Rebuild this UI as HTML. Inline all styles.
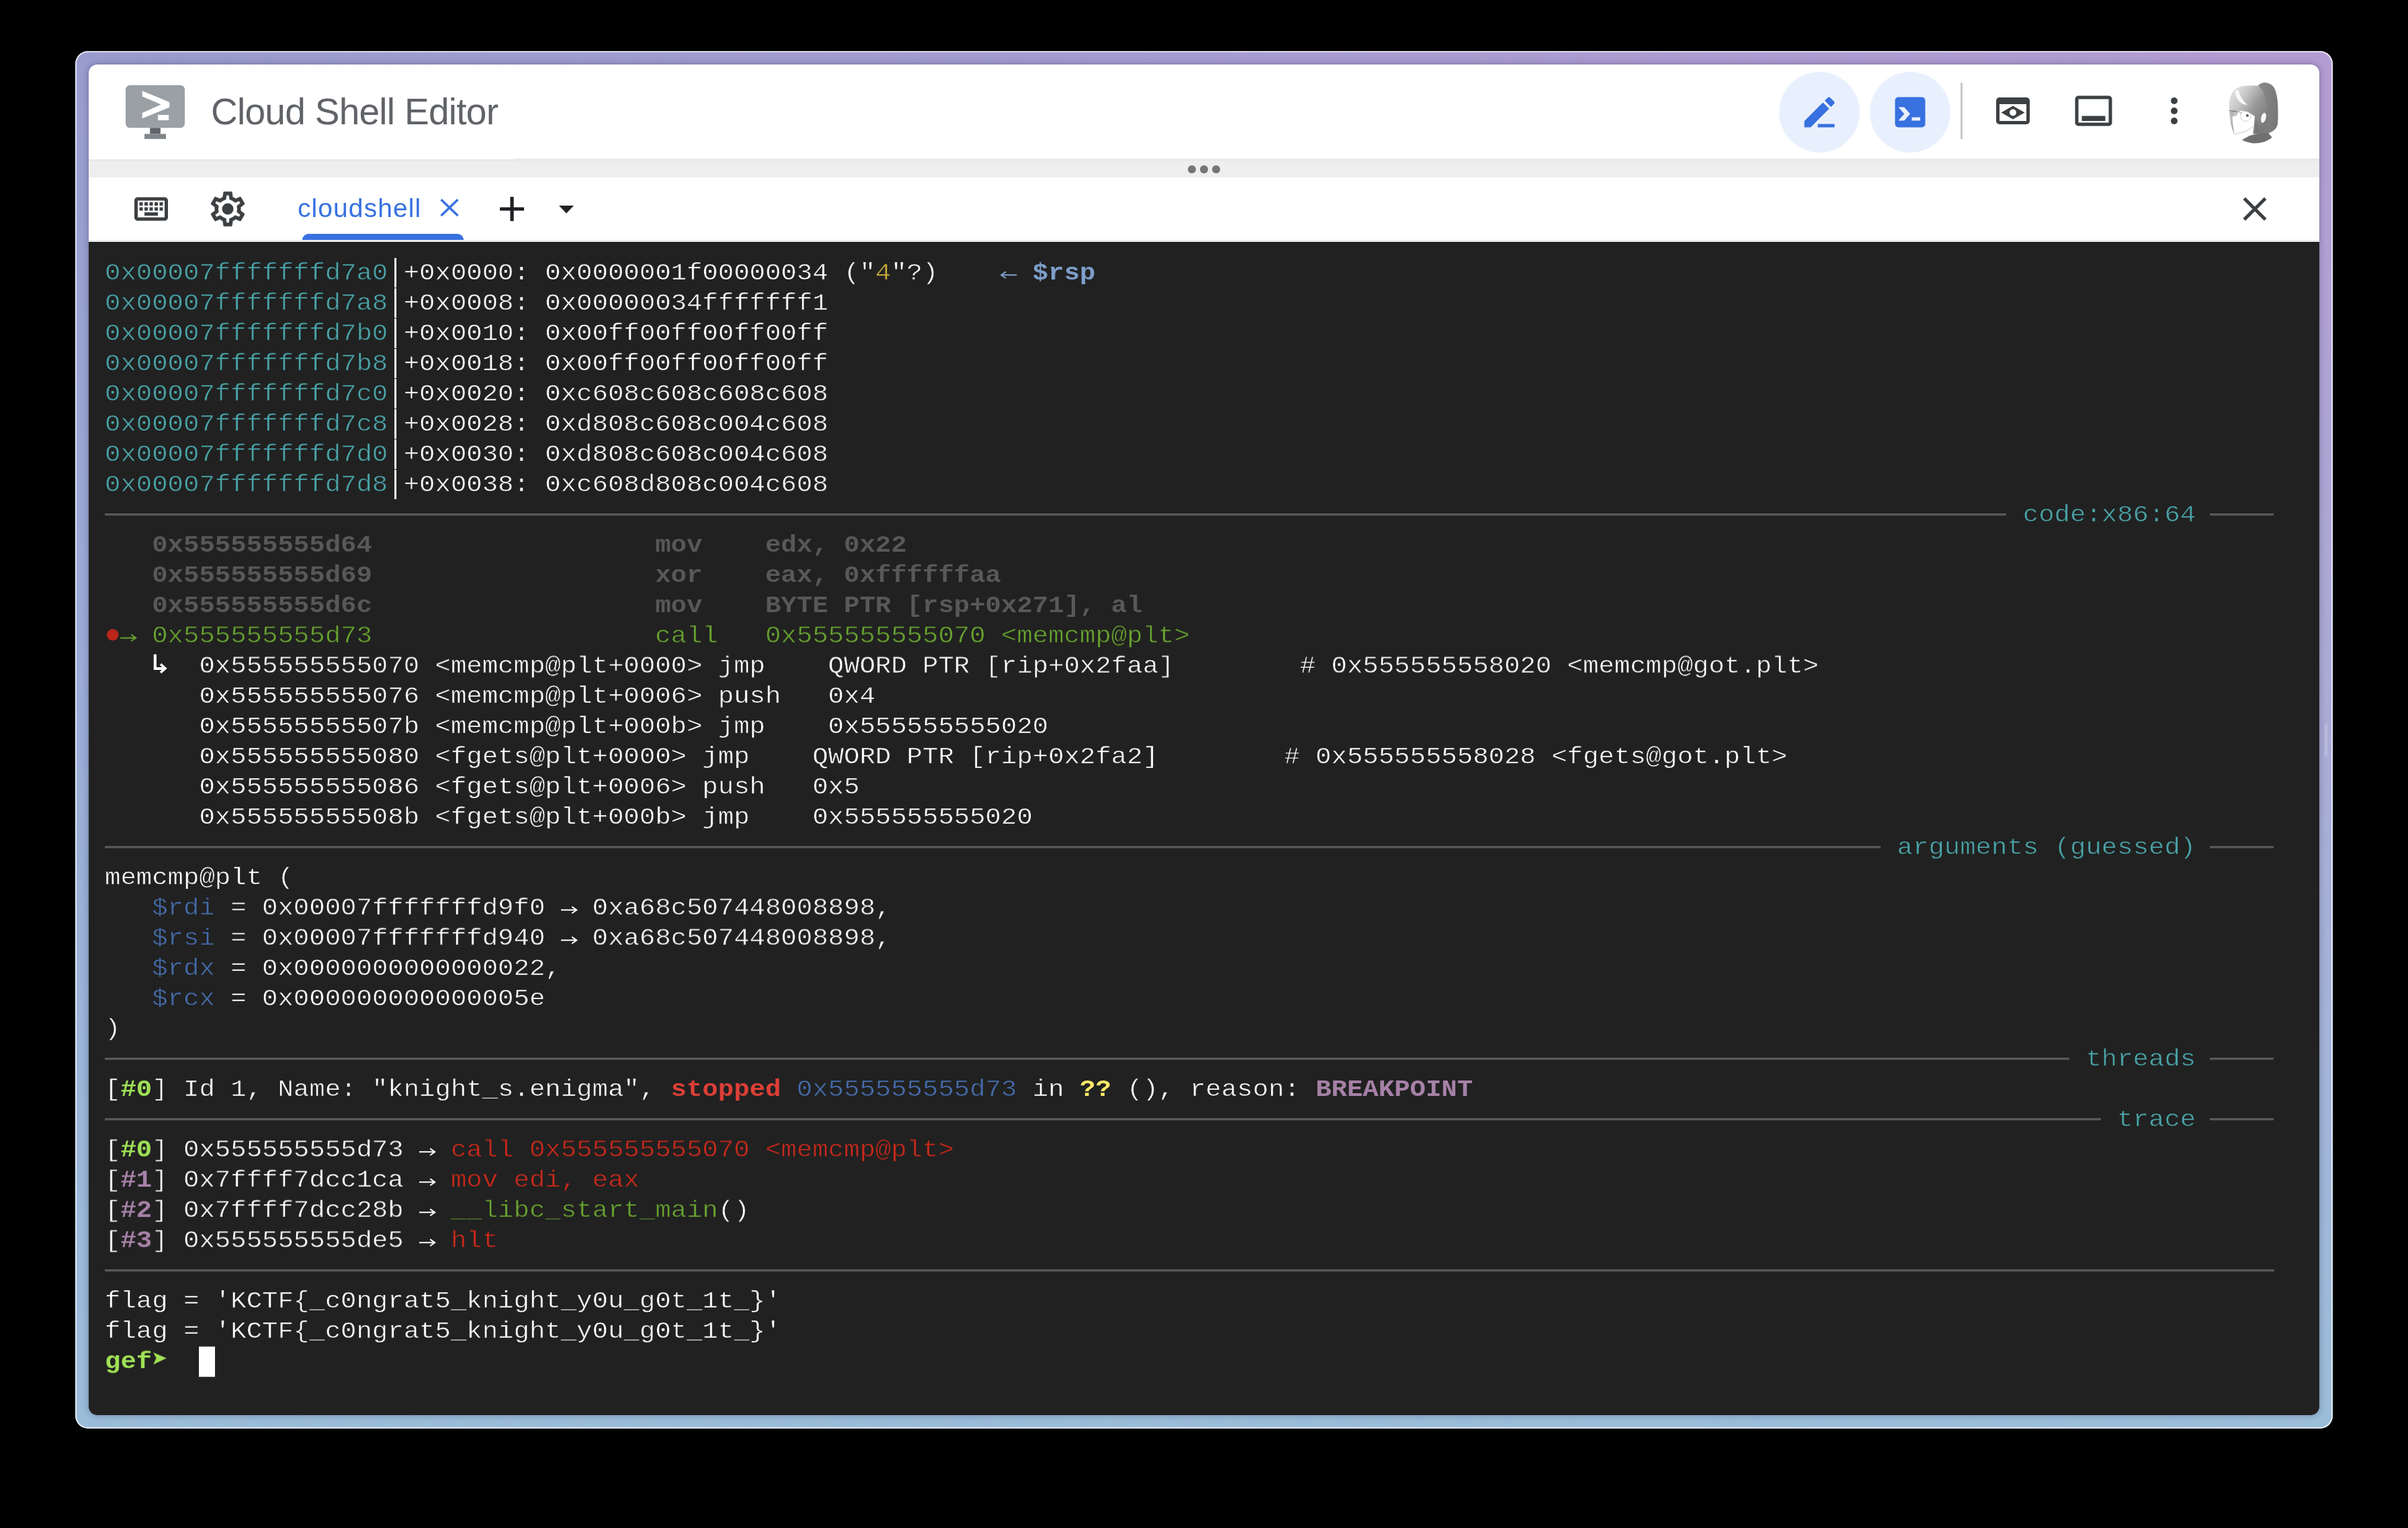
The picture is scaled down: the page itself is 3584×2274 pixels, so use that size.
<!DOCTYPE html>
<html><head><meta charset="utf-8"><title>Cloud Shell Editor</title>
<style>
html,body{margin:0;padding:0}
body{width:3584px;height:2274px;background:#000;position:relative;overflow:hidden;font-family:"Liberation Sans",sans-serif}
.frame{position:absolute;left:112px;top:76px;width:3360px;height:2050px;border-radius:19px;overflow:hidden;
 background:linear-gradient(to bottom,#999CCD 0%,#9AABD5 46%,#9BBDD9 100%)}
.frame:before{content:"";position:absolute;inset:0;background:linear-gradient(to bottom,#B39BD1 0%,#ABABD5 46%,#9BBDD9 100%);
 -webkit-mask-image:linear-gradient(to right,transparent 0%,#000 100%);mask-image:linear-gradient(to right,transparent 0%,#000 100%)}
.frame:after{content:"";position:absolute;inset:0;border-radius:19px;box-shadow:inset 0 0 0 1.6px rgba(245,247,255,.95), inset 0 0 2px 1.5px rgba(255,255,255,.3)}
.win{position:absolute;left:132px;top:96px;width:3320px;height:2010px;border-radius:13px;overflow:hidden}
.winsh{position:absolute;left:132px;top:96px;width:3320px;height:2010px;border-radius:13px;box-shadow:0 0 9px 1px rgba(40,40,80,.32)}
.hdr{position:absolute;left:0;top:0;width:3320px;height:141px;background:#fff}
.hb1{position:absolute;left:0;top:141px;width:633px;height:3px;background:#E8EAED}
.hb2{position:absolute;left:633px;top:140px;width:2687px;height:4px;background:#E8EAED}
.rsz{position:absolute;left:0;top:144px;width:3320px;height:24px;background:#EEEEEE}
.tabs{position:absolute;left:0;top:168px;width:3320px;height:93px;background:#fff;border-bottom:2px solid #E8EAED;box-shadow:0 1px 0 #F4F5FA}
.termbg{position:absolute;left:0;top:264px;width:3320px;height:1746px;background:#212121;border-top:1px solid #161616;box-sizing:border-box}
.term{position:absolute;left:0;top:264px;width:3320px;height:1746px;will-change:transform}
.abs{position:absolute}
.title{position:absolute;left:182px;top:35px;font-size:55px;line-height:70px;letter-spacing:-0.72px;color:#606367;white-space:pre}
.tabtxt{will-change:transform;position:absolute;left:310.9px;top:188.7px;font-size:39px;line-height:50px;letter-spacing:1.08px;color:#3871E0;white-space:pre}
.circ{position:absolute;width:120px;height:120px;border-radius:60px;background:#E9F0FD;top:11px}
.rows{position:absolute;left:24px;top:24px;font-family:"Liberation Mono",monospace;font-size:39px;line-height:45px;color:#fff;-webkit-text-stroke:0.6px #212121;paint-order:fill stroke}
.row{position:relative;height:45px;width:3230px;white-space:pre;transform:scaleY(.91);transform-origin:0 32.9px}
.vb,.cur,.gl,.hl,.st{transform:scaleY(1.0989);transform-origin:0 32.9px}
.bd{font-weight:bold;-webkit-text-stroke:0 transparent}
.vb{display:inline-block;width:23.4px;height:44px;vertical-align:top;background:linear-gradient(#fff,#fff) 10px 0/3.4px 44px no-repeat}
.hl{position:absolute;top:0;height:45px;background:linear-gradient(#585858,#585858) 0 20px/100% 3px no-repeat,linear-gradient(rgba(88,88,88,.32),rgba(88,88,88,.32)) 0 23px/100% 1px no-repeat}
.gl{display:inline-block;vertical-align:top;overflow:visible}
.cur{display:inline-block;width:23.4px;height:45px;background:#fff;vertical-align:top}
.k{color:#2F3436}
.r{color:#C82A1C}
.g{color:#68A430}
.y{color:#CCAD38}
.b{color:#456CAB}
.m{color:#705278}
.c{color:#4AA3A7}
.w{color:#FFFFFF}
.K{color:#585858}
.R{color:#DC3F36}
.G{color:#9EE055}
.Y{color:#F9EA6B}
.B{color:#7C9ECB}
.M{color:#A681A6}
</style></head>
<body>
<div class="frame"></div>
<div class="abs" style="left:3460px;top:1077px;width:4px;height:48px;border-radius:2px;background:rgba(255,255,255,.2)"></div>
<div class="winsh"></div>
<div class="win">
 <div class="hdr"></div><div class="hb1"></div><div class="hb2"></div>
 <!-- logo -->
 <svg class="abs" style="left:55px;top:30px" width="88" height="82" viewBox="0 0 88 82">
  <rect x="0" y="0.8" width="88" height="63.5" rx="6.5" fill="#9BA0A5"/>
  <rect x="36.3" y="64.3" width="15.5" height="9" fill="#606367"/>
  <rect x="28" y="73.3" width="32" height="7.5" fill="#81868A"/>
  <path d="M24.7 9.3L65.2 26.1V33.8L24.7 50.2V41.9L52.7 29.4L24.7 17.6Z" fill="#fff"/>
  <rect x="48" y="45" width="16.2" height="8" fill="#fff"/>
 </svg>
 <div class="title">Cloud Shell Editor</div>
 <!-- right header icons -->
 <div class="circ" style="left:2516px"></div>
 <div class="circ" style="left:2651px"></div>
 <svg class="abs" style="left:2546px;top:41px" width="60" height="60" viewBox="0 0 24 24"><path fill="#3871E0" d="M3 17.25V21h3.75L17.81 9.94l-3.75-3.75L3 17.25zM20.71 7.04c.39-.39.39-1.02 0-1.41l-2.34-2.34c-.39-.39-1.02-.39-1.41 0l-1.83 1.83 3.75 3.75 1.83-1.83zM11 19h10v2H11z"/></svg>
 <svg class="abs" style="left:2681px;top:41px" width="60" height="60" viewBox="0 0 24 24"><path fill="#3871E0" fill-rule="evenodd" d="M5 3h14a2 2 0 0 1 2 2v14a2 2 0 0 1-2 2H5a2 2 0 0 1-2-2V5a2 2 0 0 1 2-2zM5 9h3.5L12 13l-3.5 4H5l3.5-4zM13 15h5v2h-5z"/></svg>
 <div class="abs" style="left:2786px;top:27px;width:3px;height:84px;background:#C8C8C8"></div>
 <svg class="abs" style="left:2834px;top:39px" width="60" height="60" viewBox="0 0 24 24"><path fill="#3D4043" fill-rule="evenodd" d="M4 4h16a2 2 0 0 1 2 2v12a2 2 0 0 1-2 2H4a2 2 0 0 1-2-2V6a2 2 0 0 1 2-2zM4 8v10h16V8zM5 13l7-4 7 4-7 4zM12 11a2 2 0 1 0 0 4 2 2 0 0 0 0-4z"/></svg>
 <svg class="abs" style="left:2954px;top:39px" width="60" height="60" viewBox="0 0 24 24"><path fill="#3D4043" fill-rule="evenodd" d="M3 3h18a2 2 0 0 1 2 2v14a2 2 0 0 1-2 2H3a2 2 0 0 1-2-2V5a2 2 0 0 1 2-2zM3 5v14h18V5zM5 15h14v3H5z"/></svg>
 <svg class="abs" style="left:3074px;top:39px" width="60" height="60" viewBox="0 0 24 24"><g fill="#3D4043"><circle cx="12" cy="6" r="2"/><circle cx="12" cy="12" r="2"/><circle cx="12" cy="18" r="2"/></g></svg>
 <!-- avatar -->
 <svg class="abs" style="left:3176px;top:23px" width="96" height="96" viewBox="0 0 96 96">
  <defs><clipPath id="avc"><circle cx="48" cy="48" r="48"/></clipPath>
  <linearGradient id="hg" x1="0.15" y1="0.05" x2="0.95" y2="0.75"><stop offset="0" stop-color="#E2E2E2"/><stop offset="0.3" stop-color="#C4C4C4"/><stop offset="0.6" stop-color="#989898"/><stop offset="1" stop-color="#7A7A7A"/></linearGradient>
  <linearGradient id="pg" x1="0" y1="0" x2="1" y2="0.3"><stop offset="0" stop-color="#8C8C8C"/><stop offset="1" stop-color="#787878"/></linearGradient>
  <filter id="avb"><feGaussianBlur stdDeviation="0.5"/></filter></defs>
  <g clip-path="url(#avc)" filter="url(#avb)">
   <rect width="96" height="96" fill="#fff"/>
   <path d="M52.6 8.5Q58 3.5 64.5 3.9Q72 4.5 76.5 11Q81.5 20 82.3 38Q83 55 82 66Q80.5 72 75 76L68 79.5L62 78L66 50L60 18Z" fill="url(#pg)"/>
   <path d="M10 45.1Q9.5 35 10.8 28Q12.5 20.5 17 15.5Q22 10.8 30 9.2Q41 7.6 52.6 8.5Q57.5 12 60.5 19Q64.5 28 66 40Q67.5 56 65.5 70L63.6 78.5Q56 80.5 45.3 80.6Q46.8 68 48 54.3Q43 50 37 47.6Q29 45 22 46.3Q18 47 16 49.5Q14.5 54 15.2 63.4Q16 73 17.8 80.8Q13.5 73 11.5 62Q10.2 53 10 45.1Z" fill="url(#hg)"/>
   <path d="M18.5 17Q19.5 29 28 34.5Q32.5 37.3 37 37Q31 32 27.5 25.5Q24.8 20 23.5 14.5Z" fill="#FAFAFA" opacity=".95"/>
   <ellipse cx="61" cy="56.3" rx="3.6" ry="7.6" transform="rotate(14 61 56.3)" fill="#F7F7F7"/>
   <path d="M49.5 58L48 80L52 80L53.5 66Z" fill="#6E6E6E" opacity=".55"/>
   <path d="M28.8 89.5Q35 85.5 40.7 82.7Q54 79.3 67.3 78.1L73.7 85.4Q67 91 58 93Q50 94.8 43.4 93.9Q35 92.5 28.8 89.5Z" fill="#6F6F6F"/>
   <ellipse cx="16.9" cy="49.4" rx="5.8" ry="4.8" fill="#A8A8A8" opacity=".7"/>
   <circle cx="34.3" cy="53.8" r="7.6" fill="none" stroke="#BDBDBD" stroke-width="0.7"/>
   <path d="M9.5 45.5L23 47.5M23 47.5Q27 46.5 27.5 50" stroke="#6a6a6a" stroke-width="0.9" fill="none"/>
   <path d="M17.8 80.8Q27 78.5 34.3 76.3Q41 73 45.3 68.9" stroke="#B8B8B8" stroke-width="0.8" fill="none"/>
   <ellipse cx="37" cy="52.9" rx="2.1" ry="1.8" fill="#4E3E36"/>
   <circle cx="37.8" cy="52.6" r="0.7" fill="#fff"/>
  </g>
 </svg>
 <!-- resize bar -->
 <div class="rsz"></div>
 <svg class="abs" style="left:1630px;top:144px" width="60" height="24" viewBox="0 0 60 24"><g fill="#757575"><circle cx="12" cy="11.9" r="6"/><circle cx="30" cy="11.9" r="6"/><circle cx="48" cy="11.9" r="6"/></g></svg>
 <!-- tab bar -->
 <div class="tabs"></div>
 <svg class="abs" style="left:63px;top:185px" width="60" height="60" viewBox="0 0 24 24"><path fill="#3D4043" d="M20 7v10H4V7h16m0-2H4c-1.1 0-1.99.9-1.99 2L2 17c0 1.1.9 2 2 2h16c1.1 0 2-.9 2-2V7c0-1.1-.9-2-2-2zm-9 3h2v2h-2zm0 3h2v2h-2zM8 8h2v2H8zm0 3h2v2H8zm-3 0h2v2H5zm0-3h2v2H5zm3 6h8v2H8zm6-3h2v2h-2zm0-3h2v2h-2zm3 3h2v2h-2zm0-3h2v2h-2z"/></svg>
 <svg class="abs" style="left:177px;top:185px" width="60" height="60" viewBox="0 0 24 24"><path fill="#3D4043" stroke="#3D4043" stroke-width="0.16" stroke-linejoin="round" transform="translate(12 12) scale(1.03) translate(-12 -12)" d="M19.43 12.98c.04-.32.07-.64.07-.98 0-.34-.03-.66-.07-.98l2.11-1.65c.19-.15.24-.42.12-.64l-2-3.46c-.09-.16-.26-.25-.44-.25-.06 0-.12.01-.17.03l-2.49 1c-.52-.4-1.08-.73-1.69-.98l-.38-2.65C14.46 2.18 14.25 2 14 2h-4c-.25 0-.46.18-.49.42l-.38 2.65c-.61.25-1.17.59-1.69.98l-2.49-1c-.06-.02-.12-.03-.18-.03-.17 0-.34.09-.43.25l-2 3.46c-.13.22-.07.49.12.64l2.11 1.65c-.04.32-.07.65-.07.98 0 .33.03.66.07.98l-2.11 1.65c-.19.15-.24.42-.12.64l2 3.46c.09.16.26.25.44.25.06 0 .12-.01.17-.03l2.49-1c.52.4 1.08.73 1.69.98l.38 2.65c.03.24.24.42.49.42h4c.25 0 .46-.18.49-.42l.38-2.65c.61-.25 1.17-.59 1.69-.98l2.49 1c.06.02.12.03.18.03.17 0 .34-.09.43-.25l2-3.46c.12-.22.07-.49-.12-.64l-2.11-1.65zm-1.98-1.71c.04.31.05.52.05.73 0 .21-.02.43-.05.73l-.14 1.13.89.7 1.08.84-.7 1.21-1.27-.51-1.04-.42-.9.68c-.43.32-.84.56-1.25.73l-1.06.43-.16 1.13-.2 1.35h-1.4l-.19-1.35-.16-1.13-1.06-.43c-.43-.18-.83-.41-1.23-.71l-.91-.7-1.06.43-1.27.51-.7-1.21 1.08-.84.89-.7-.14-1.13c-.03-.31-.05-.54-.05-.74s.02-.43.05-.73l.14-1.13-.89-.7-1.08-.84.7-1.21 1.27.51 1.04.42.9-.68c.43-.32.84-.56 1.25-.73l1.06-.43.16-1.13.2-1.35h1.39l.19 1.35.16 1.13 1.06.43c.43.18.83.41 1.23.71l.91.7 1.06-.43 1.27-.51.7 1.21-1.07.85-.89.7.14 1.13z"/><circle cx="12" cy="12" r="3.4" fill="#3D4043"/></svg>
 <div class="tabtxt">cloudshell</div>
 <svg class="abs" style="left:519px;top:195px" width="36" height="36" viewBox="0 0 36 36"><path d="M5.5 6L30.5 30M30.5 6L5.5 30" stroke="#3871E0" stroke-width="3.4" fill="none"/></svg>
 <div class="abs" style="left:318px;top:252px;width:240px;height:9px;background:#3871E0;border-radius:9px 9px 0 0"></div>
 <svg class="abs" style="left:606px;top:191px" width="48" height="48" viewBox="0 0 48 48"><path d="M24 6V42M6 24H42" stroke="#1F2023" stroke-width="5.2" fill="none"/></svg>
 <svg class="abs" style="left:696px;top:206px" width="30" height="20" viewBox="0 0 30 20"><path d="M4 4H26L15 15.4Z" fill="#202124"/></svg>
 <svg class="abs" style="left:3194px;top:185px" width="60" height="60" viewBox="0 0 24 24"><path fill="#3D4043" d="M19 6.41L17.59 5 12 10.59 6.41 5 5 6.41 10.59 12 5 17.59 6.41 19 12 13.41 17.59 19 19 17.59 13.41 12z"/></svg>
 <!-- terminal -->
 <div class="termbg"></div><div class="term"><div class="rows">
<div class="row"><span class="c">0x00007fffffffd7a0</span><i class="vb"></i>+0x0000: 0x0000001f00000034 ("<span class="y">4</span>"?)    <span class="B bd"><svg class="gl" viewBox="0 0 23.4 45" width="23.4" height="45"><path d="M23.4 25.3H0.6M7.2 20.4L0.2 25.3L7.2 30.2" fill="none" stroke="currentColor" stroke-width="2"/></svg> $rsp</span></div><div class="row"><span class="c">0x00007fffffffd7a8</span><i class="vb"></i>+0x0008: 0x00000034fffffff1</div><div class="row"><span class="c">0x00007fffffffd7b0</span><i class="vb"></i>+0x0010: 0x00ff00ff00ff00ff</div><div class="row"><span class="c">0x00007fffffffd7b8</span><i class="vb"></i>+0x0018: 0x00ff00ff00ff00ff</div><div class="row"><span class="c">0x00007fffffffd7c0</span><i class="vb"></i>+0x0020: 0xc608c608c608c608</div><div class="row"><span class="c">0x00007fffffffd7c8</span><i class="vb"></i>+0x0028: 0xd808c608c004c608</div><div class="row"><span class="c">0x00007fffffffd7d0</span><i class="vb"></i>+0x0030: 0xd808c608c004c608</div><div class="row"><span class="c">0x00007fffffffd7d8</span><i class="vb"></i>+0x0038: 0xc608d808c004c608</div><div class="row"><i class="hl" style="left:0;width:2830.4px"></i><span class="c" style="position:absolute;left:2854.8px">code:x86:64</span><i class="hl" style="left:3132.6px;width:95.1px"></i></div><div class="row"><span class="K bd">   0x555555555d64                  mov    edx, 0x22</span></div><div class="row"><span class="K bd">   0x555555555d69                  xor    eax, 0xffffffaa</span></div><div class="row"><span class="K bd">   0x555555555d6c                  mov    BYTE PTR [rsp+0x271], al</span></div><div class="row"><span class="r"><svg class="gl" viewBox="0 0 23.4 45" width="23.4" height="45"><circle cx="11.7" cy="20.7" r="8.7" fill="#BB271A"/></svg></span><span class="g"><svg class="gl" viewBox="0 0 23.4 45" width="23.4" height="45"><path d="M0 25.3H22.8M16.2 20.4L23.2 25.3L16.2 30.2" fill="none" stroke="currentColor" stroke-width="2"/></svg> 0x555555555d73                  call   0x555555555070 &lt;memcmp@plt&gt;</span></div><div class="row">   <svg class="gl" viewBox="0 0 23.4 45" width="23.4" height="45"><path d="M4.85 4.8V26H18" fill="none" stroke="#fff" stroke-width="4.2"/><path d="M13 19.4L20 25.7L13 32" fill="none" stroke="#fff" stroke-width="3.6"/></svg>  0x555555555070 &lt;memcmp@plt+0000&gt; jmp    QWORD PTR [rip+0x2faa]        # 0x555555558020 &lt;memcmp@got.plt&gt;</div><div class="row">      0x555555555076 &lt;memcmp@plt+0006&gt; push   0x4</div><div class="row">      0x55555555507b &lt;memcmp@plt+000b&gt; jmp    0x555555555020</div><div class="row">      0x555555555080 &lt;fgets@plt+0000&gt; jmp    QWORD PTR [rip+0x2fa2]        # 0x555555558028 &lt;fgets@got.plt&gt;</div><div class="row">      0x555555555086 &lt;fgets@plt+0006&gt; push   0x5</div><div class="row">      0x55555555508b &lt;fgets@plt+000b&gt; jmp    0x555555555020</div><div class="row"><i class="hl" style="left:0;width:2643.2px"></i><span class="c" style="position:absolute;left:2667.6px">arguments (guessed)</span><i class="hl" style="left:3132.6px;width:95.1px"></i></div><div class="row">memcmp@plt (</div><div class="row">   <span class="b">$rdi</span> = 0x00007fffffffd9f0 <svg class="gl" viewBox="0 0 23.4 45" width="23.4" height="45"><path d="M0 25.3H22.8M16.2 20.4L23.2 25.3L16.2 30.2" fill="none" stroke="currentColor" stroke-width="2"/></svg> 0xa68c507448008898,</div><div class="row">   <span class="b">$rsi</span> = 0x00007fffffffd940 <svg class="gl" viewBox="0 0 23.4 45" width="23.4" height="45"><path d="M0 25.3H22.8M16.2 20.4L23.2 25.3L16.2 30.2" fill="none" stroke="currentColor" stroke-width="2"/></svg> 0xa68c507448008898,</div><div class="row">   <span class="b">$rdx</span> = 0x0000000000000022,</div><div class="row">   <span class="b">$rcx</span> = 0x000000000000005e</div><div class="row">)</div><div class="row"><i class="hl" style="left:0;width:2924.0px"></i><span class="c" style="position:absolute;left:2948.4px">threads</span><i class="hl" style="left:3132.6px;width:95.1px"></i></div><div class="row">[<span class="G bd">#0</span>] Id 1, Name: "knight_s.enigma", <span class="R bd">stopped</span> <span class="b">0x555555555d73</span> in <span class="Y bd">??</span> (), reason: <span class="M bd">BREAKPOINT</span></div><div class="row"><i class="hl" style="left:0;width:2970.8px"></i><span class="c" style="position:absolute;left:2995.2px">trace</span><i class="hl" style="left:3132.6px;width:95.1px"></i></div><div class="row">[<span class="G bd">#0</span>] 0x555555555d73 <svg class="gl" viewBox="0 0 23.4 45" width="23.4" height="45"><path d="M0 25.3H22.8M16.2 20.4L23.2 25.3L16.2 30.2" fill="none" stroke="currentColor" stroke-width="2"/></svg> <span class="r">call 0x555555555070 &lt;memcmp@plt&gt;</span></div><div class="row">[<span class="M bd">#1</span>] 0x7ffff7dcc1ca <svg class="gl" viewBox="0 0 23.4 45" width="23.4" height="45"><path d="M0 25.3H22.8M16.2 20.4L23.2 25.3L16.2 30.2" fill="none" stroke="currentColor" stroke-width="2"/></svg> <span class="r">mov edi, eax</span></div><div class="row">[<span class="M bd">#2</span>] 0x7ffff7dcc28b <svg class="gl" viewBox="0 0 23.4 45" width="23.4" height="45"><path d="M0 25.3H22.8M16.2 20.4L23.2 25.3L16.2 30.2" fill="none" stroke="currentColor" stroke-width="2"/></svg> <span class="g">__libc_start_main</span>()</div><div class="row">[<span class="M bd">#3</span>] 0x555555555de5 <svg class="gl" viewBox="0 0 23.4 45" width="23.4" height="45"><path d="M0 25.3H22.8M16.2 20.4L23.2 25.3L16.2 30.2" fill="none" stroke="currentColor" stroke-width="2"/></svg> <span class="r">hlt</span></div><div class="row"><i class="hl" style="left:0;width:3229.2px"></i></div><div class="row">flag = 'KCTF{_c0ngrat5_knight_y0u_g0t_1t_}'</div><div class="row">flag = 'KCTF{_c0ngrat5_knight_y0u_g0t_1t_}'</div><div class="row"><span class="G bd">gef</span><svg class="gl" viewBox="0 0 23.4 45" width="23.4" height="45"><path d="M2.1 8.7L22 17.4L2.1 26.7L6.6 17.4Z" fill="#9EE055"/></svg>  <i class="cur"></i></div>
 </div></div>
</div>
</body></html>
